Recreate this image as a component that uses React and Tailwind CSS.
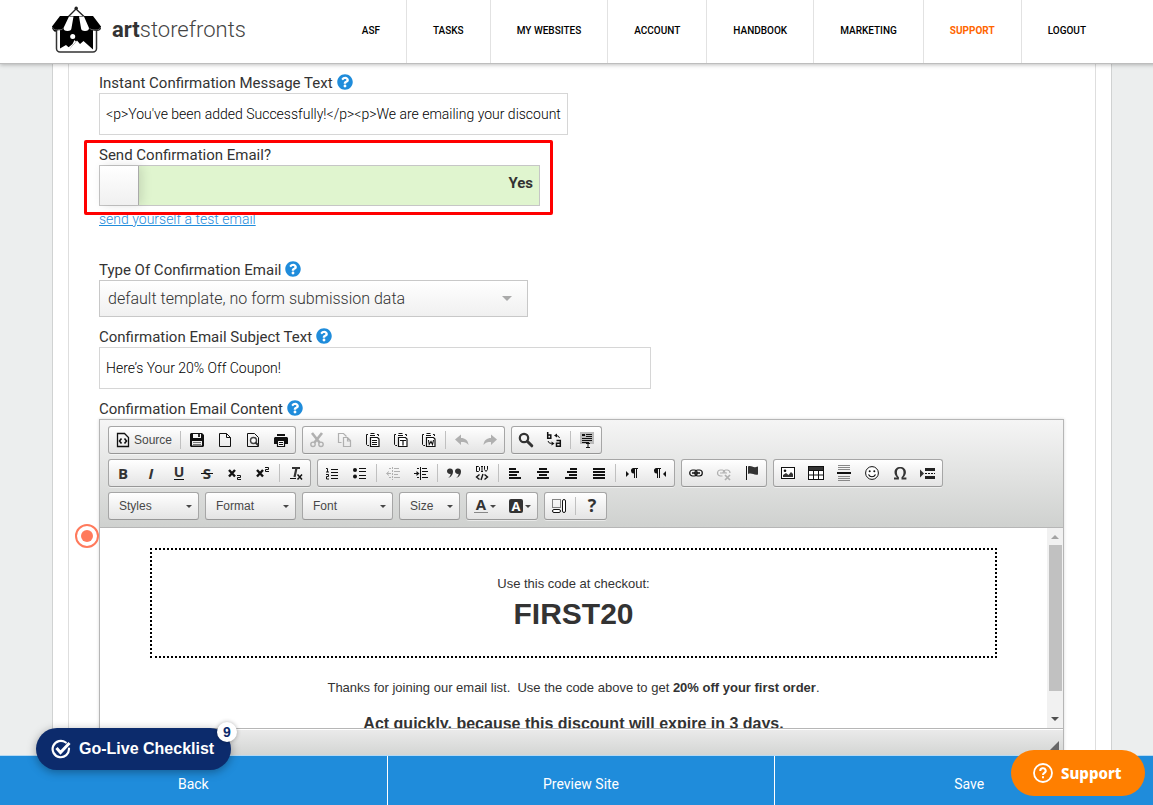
import React from "react";
import { FaQuestionCircle } from "react-icons/fa";

const NAV = ["ASF", "TASKS", "MY WEBSITES", "ACCOUNT", "HANDBOOK", "MARKETING", "SUPPORT", "LOGOUT"];

const DOC = "M2.5 1.5h7l4 4v9h-11z";

function Rows({ rows, h = 2, y0 = 3, step = 3 }) {
  return rows.map(([x, w], i) => <rect key={i} x={x} y={y0 + i * step} width={w} height={h} />);
}

function Clipboard({ children }) {
  return (
    <>
      <path d="M3 2.500H1.500V12.500L2.500 13.500H4" fill="none" stroke="currentColor" />
      <path d="M4 4V2.500h2v-1h3v1h2V4z" fill="#fff" />
      <path d="M5 3.500h5M5.500 1.500h4M12 2.500h1.500V4" fill="none" stroke="currentColor" />
      <path d="M5.500 5.500h7l1.500 1.500v7.500h-8.500z" fill="#fff" stroke="currentColor" strokeWidth="1.200" />
      {children}
    </>
  );
}

const Letter = ({ x = 8, y = 14, size = 15, children, ...rest }) => (
  <text x={x} y={y} fontSize={size} fontWeight="700" textAnchor="middle" fontFamily="Open Sans, sans-serif" {...rest}>
    {children}
  </text>
);

const ICONS = {
  source: (
    <>
      <path d={DOC} fill="none" stroke="currentColor" strokeWidth="1.3" />
      <path d="M6.500 6.500 4.500 9l2 2.500M9.500 6.500l2 2.500-2 2.500" fill="none" stroke="currentColor" strokeWidth="1.6" />
    </>
  ),
  save: (
    <>
      <path fillRule="evenodd" d="M2 1h11l2 2v11l-1 1H2l-1-1V2zM4 2v4h8V2zM3 9v4.500h10V9z" />
      <path d="M4 10h8v1H4zM4 12h8v1H4z" fill="#777" />
      <rect x="9" y="2" width="2" height="3" fill="#333" />
    </>
  ),
  newPage: <path d={DOC + "M9.500 1.500v4h4"} fill="none" stroke="currentColor" />,
  preview: (
    <>
      <path d={DOC} fill="none" stroke="currentColor" />
      <circle cx="8.500" cy="8.500" r="3" fill="#fff" stroke="#444" strokeWidth="1.4" />
      <path d="m10.500 10.500 3 3" stroke="#333" strokeWidth="2" />
    </>
  ),
  print: (
    <>
      <path d="M4 2h8v2H4zM2 5h12l1 1v6h-3V8H4v4H1V6z" />
      <path d="M4.500 8.500h7v6h-7z" fill="#fff" stroke="currentColor" strokeWidth="1.200" />
      <path d="M6 10.500h4M6 12.500h4" stroke="currentColor" />
    </>
  ),
  cut: (
    <>
      <path d="m3 1 7.500 9.500M13 1 5.500 10.500" fill="none" stroke="currentColor" strokeWidth="2.600" />
      <circle cx="4" cy="12.300" r="2.200" fill="none" stroke="currentColor" strokeWidth="1.400" />
      <circle cx="12" cy="12.300" r="2.200" fill="none" stroke="currentColor" strokeWidth="1.400" />
    </>
  ),
  copy: (
    <>
      <path d="M4.500 10.500h-3v-9h5l3 3" fill="none" stroke="currentColor" strokeWidth="1.200" />
      <path d="M6.500 5.500h4l3 3v6h-7zM10.500 6v3h3" fill="none" stroke="currentColor" strokeWidth="1.200" />
    </>
  ),
  paste: (
    <Clipboard>
      <path d="M7 8.500h5M7 10.500h5M7 12.500h5" stroke="currentColor" />
    </Clipboard>
  ),
  pasteText: (
    <Clipboard>
      <path d="M7 8.500h6M10 8.500v5" stroke="currentColor" strokeWidth="1.200" />
    </Clipboard>
  ),
  pasteWord: (
    <Clipboard>
      <path d="m7.500 8 .7 4.500L10 9.500l1.500 3L12.500 8" fill="none" stroke="currentColor" strokeWidth="1.100" />
    </Clipboard>
  ),
  undo: <path d="M7 2.500v3.500c4 0 7 2 7.500 7-2-2.500-4-3-7.500-3V13L1 7.500z" />,
  redo: <path d="M9 2.500v3.500C5 6 2 8 1.500 13c2-2.500 4-3 7.500-3V13l6-5.500z" />,
  find: (
    <>
      <circle cx="6" cy="6" r="4.200" fill="none" stroke="#333" strokeWidth="2.200" />
      <path d="m9.500 9.500 4.300 4.300" stroke="#333" strokeWidth="3" strokeLinecap="round" />
    </>
  ),
  replace: (
    <>
      <path d="M1.700 0v6.300H4.800V3H1.700M10.500 8.500h3.800V14.300H10.500v-3.100h3.800" fill="none" stroke="currentColor" strokeWidth="1.500" />
      <path d="M10 3.500q3 0 3.500 2.500M2 9q.500 2.500 3.500 2.500" fill="none" stroke="currentColor" />
      <path d="M11 1.500 8 3.500l3 2zM5.500 9.500l3 2-3 2z" />
    </>
  ),
  selectAll: (
    <>
      <rect x="1" y="0" width="14" height="12" fill="#bbb" />
      <path d="M3 2h3v2H3zM7 2h6v1H7zM7 4h6v1H7zM3 6h10v1H3zM3 8h10v1H3zM3 10h7v1H3zM7 11h4v1H9.500v3H11v1H7v-1h1.500v-3H7z" />
    </>
  ),
  bold: <Letter fill="#333">B</Letter>,
  italic: <Letter fontStyle="italic" fill="#333">I</Letter>,
  underline: (
    <>
      <Letter y={12} size={14} fill="#333">U</Letter>
      <path d="M3 14.500h10" stroke="currentColor" />
    </>
  ),
  strike: (
    <>
      <Letter fill="#333">S</Letter>
      <path d="M2 8.500h12" stroke="currentColor" />
    </>
  ),
  sub: (
    <>
      <path d="m2 5 6 6.500M8 5l-6 6.500" stroke="currentColor" strokeWidth="2.400" />
      <path d="M10 10.500h3.500v2H10.500v2h3.500" fill="none" stroke="currentColor" />
    </>
  ),
  sup: (
    <>
      <path d="m2 5 6 6.500M8 5l-6 6.500" stroke="currentColor" strokeWidth="2.400" />
      <path d="M10 2.500h3.500v2H10.500v2h3.500" fill="none" stroke="currentColor" />
    </>
  ),
  removeFormat: (
    <>
      <path d="M4 3h8M8.500 3 6.500 12" stroke="#333" strokeWidth="2.200" />
      <path d="M2 13.500h6" stroke="currentColor" />
      <path d="m9.500 9.500 4.500 5M14 9.500l-4.500 5" stroke="currentColor" strokeWidth="1.500" />
    </>
  ),
  numbered: (
    <>
      <path d="M2 3.500h1.500V7M2 7h3M2 9.500h2.500v2H2.500v2.500H5" fill="none" stroke="currentColor" />
      <path d="M7 4h7v1H7zM7 7h7v1H7zM7 10h7v1H7zM7 13h7v1H7z" />
    </>
  ),
  bulleted: (
    <>
      <circle cx="3" cy="5" r="2" />
      <circle cx="3" cy="11.500" r="2" />
      <path d="M7 3h7v1H7zM7 6h7v1H7zM7 10h7v1H7zM7 13h7v1H7z" />
    </>
  ),
  outdent: (
    <>
      <path d="M7.500 2v13" stroke="currentColor" strokeDasharray="2 1" />
      <path d="M9 3h5v1H9zM9 6h6v1H9zM9 9h4v1H9zM9 12h6v1H9zM4 3h2v1H4zM4 12h2v1H4z" />
      <path d="M2 8.500h4M4 6.500l-2.500 2L4 10.500" fill="none" stroke="currentColor" />
    </>
  ),
  indent: (
    <>
      <path d="M7.500 2v13" stroke="currentColor" />
      <path d="M9 3h5v1H9zM9 6h6v1H9zM9 9h4v1H9zM9 12h6v1H9zM4 3h2v1H4zM4 12h2v1H4z" />
      <path d="M1 8.500h3" stroke="currentColor" />
      <path d="m3.500 6 3 2.500-3 2.500z" />
    </>
  ),
  quote: (
    <path
      fill="#333"
      d="M4 3.500a2.700 2.700 0 1 0 .7 5.200C4.500 10.500 3.500 12 2 13c3.500-1 5-4 5-6.500A3 3 0 0 0 4 3.500zM12 3.500a2.700 2.700 0 1 0 .7 5.200c-.2 1.800-1.200 3.300-2.700 4.300 3.500-1 5-4 5-6.500a3 3 0 0 0-3-3z"
    />
  ),
  div: (
    <>
      <path d="M2.500 1v5.500h2l1-1v-3l-1-1h-2M7 1.500h2M8 1.500v5M7 6.500h2M10.500 1v3.500l1.500 2 1.500-2V1" fill="none" stroke="currentColor" />
      <path d="M5.500 9.500 2.500 12l3 2.500M10.500 9.500l3 2.500-3 2.500M9 9l-2 6" fill="none" stroke="currentColor" strokeWidth="1.400" />
    </>
  ),
  alignLeft: <Rows rows={[[2, 7], [2, 10], [2, 8], [2, 12]]} />,
  alignCenter: <Rows rows={[[4, 8], [2, 12], [4, 8], [2, 12]]} />,
  alignRight: <Rows rows={[[7, 7], [4, 10], [6, 8], [2, 12]]} />,
  justify: <Rows rows={[[2, 12], [2, 12], [2, 12], [2, 12]]} />,
  ltr: (
    <>
      <path d="m2 6 3 3-3 3z" />
      <path d="M9.500 3H14v1h-1v9h-1V4h-1v9h-1V8.500a2.700 2.700 0 0 1-.5-5.500z" />
    </>
  ),
  rtl: (
    <>
      <path d="m14 6-3 3 3 3z" />
      <path d="M4.500 3H9v1H8v9H7V4H6v9H5V8.500A2.700 2.700 0 0 1 4.500 3z" />
    </>
  ),
  link: (
    <>
      <rect x="1.700" y="5" width="7.500" height="6" rx="3" fill="none" stroke="currentColor" strokeWidth="1.200" />
      <rect x="6.800" y="5" width="7.500" height="6" rx="3" fill="none" stroke="currentColor" strokeWidth="1.200" />
      <path d="M4 8h8" stroke="currentColor" strokeWidth="1.500" />
    </>
  ),
  unlink: (
    <>
      <path d="M6.500 11H4.500a3 3 0 0 1 0-6H6.500a3 3 0 0 1 2.500 2.500M7 7.500A3 3 0 0 1 9.500 5h2a3 3 0 0 1 2.500 3M4 8h7" fill="none" stroke="currentColor" strokeWidth="1.200" />
      <path d="m9 10 5 5M14 10l-5 5" stroke="currentColor" strokeWidth="1.700" />
    </>
  ),
  flag: (
    <>
      <path d="M2.500 1v14" stroke="currentColor" />
      <path d="M4 1.500c3-1.500 5 1.500 8 .5l2-.5v8c-4 1-6-2-10-.500z" fill="#333" />
    </>
  ),
  image: (
    <>
      <rect x="1.500" y="2.500" width="13" height="11" fill="#fff" stroke="currentColor" />
      <circle cx="5" cy="5.800" r="1.300" />
      <path d="m3 12 0-2 3-2 2.500 2L11 7l2 2v3z" fill="#333" />
    </>
  ),
  table: (
    <>
      <rect x="0.500" y="1.500" width="15" height="13" fill="#fff" stroke="currentColor" />
      <rect x="1" y="2" width="14" height="3" fill="#333" />
      <path d="M1 5.500h14M1 10h14M5.500 5v9M10.500 5v9" stroke="currentColor" />
    </>
  ),
  rule: (
    <>
      <path d="M2 .500h12M2 2.500h12M2 4.500h12M2 11.500h12M2 13.500h12M2 15.500h12" stroke="#888" />
      <path d="M1 8h14" stroke="currentColor" strokeWidth="2" />
    </>
  ),
  smiley: (
    <>
      <circle cx="8" cy="8" r="6.400" fill="#fff" stroke="currentColor" />
      <circle cx="5.700" cy="6.200" r="1" />
      <circle cx="10.300" cy="6.200" r="1" />
      <path d="M4.500 9.500c1.500 3 5.500 3 7 0" fill="none" stroke="currentColor" strokeWidth="1.200" />
    </>
  ),
  omega: (
    <path
      fill="#333"
      d="M2 14.500v-2h3.300C3.500 11 2.500 9.300 2.500 7.200 2.500 4 4.800 2 8.200 2s5.700 2 5.700 5.200c0 2.100-1 3.800-2.800 5.300h3.300v2H9.500v-2.200c1.400-1.100 2-2.800 2-5 0-2.300-1.200-3.800-3.300-3.800S4.900 5 4.900 7.300c0 2.200.6 3.900 2 5v2.200z"
    />
  ),
  pageBreak: (
    <>
      <path d="m0 4.500 4 4-4 4z" fill="#333" />
      <path d="M5 3h10v3H5zM5 11h10v3H5z" fill="#222" />
      <path d="M5 8.500h10" stroke="currentColor" strokeDasharray="2 1" />
    </>
  ),
  textColor: (
    <>
      <Letter y={12} size={15} fill="#333">A</Letter>
      <path d="M1 14.500h14" stroke="#888" />
    </>
  ),
  bgColor: (
    <>
      <rect x="1" y="1" width="14" height="14" rx="2" fill="#333" />
      <Letter y={13} size={13} fill="#fff">A</Letter>
    </>
  ),
  blocks: (
    <>
      <rect x="1.500" y="1.500" width="8" height="8" fill="none" stroke="currentColor" strokeDasharray="1 1" />
      <rect x="11.500" y="1.500" width="3" height="13" rx="1.500" fill="#fff" stroke="currentColor" />
      <rect x="1.500" y="11.500" width="8" height="3" rx="1.500" fill="#fff" stroke="currentColor" />
    </>
  ),
  help: <Letter size={18} fill="#333">?</Letter>,
};

function Icon({ name }) {
  return (
    <svg viewBox="0 0 16 16" className="h-4 w-4 shrink-0 overflow-visible" fill="currentColor" aria-hidden="true">
      {ICONS[name]}
    </svg>
  );
}

function Caret() {
  return <span className="border-x-[3px] border-t-[3px] border-x-transparent border-t-[#474747]" />;
}

const DISABLED = ["cut", "copy", "undo", "redo", "outdent", "unlink"];

function Group({ items }) {
  return (
    <div className="flex h-7 items-center rounded-[3px] border border-[#a6a6a6] border-b-[#979797] bg-linear-to-b from-white to-[#e4e4e4] shadow-[0_1px_0_rgba(255,255,255,.5)]">
      {items.map((name, i) => {
        if (name === "|") return <span key={i} className="mx-[2px] h-[18px] w-px bg-[#c0c0c0]" />;
        if (name === "source")
          return (
            <button key={i} className="flex h-full items-center gap-[3px] px-[6px] text-[12px] text-[#484848]">
              <span className="text-[#111]">
                <Icon name="source" />
              </span>
              Source
            </button>
          );
        const color = name === "textColor" || name === "bgColor";
        return (
          <button
            key={i}
            aria-label={name}
            disabled={DISABLED.includes(name)}
            className="flex h-full items-center gap-px px-[6px] text-[#111] disabled:text-[#b0b0b0]"
          >
            <Icon name={name} />
            {color && <Caret />}
          </button>
        );
      })}
    </div>
  );
}

function Combo({ label, small }) {
  return (
    <button
      className={
        "flex h-7 items-center justify-between rounded-[3px] border border-[#a6a6a6] border-b-[#979797] bg-linear-to-b from-white to-[#e4e4e4] pr-[6px] pl-[10px] text-[12px] text-[#484848] " +
        (small ? "w-[61px]" : "w-[91px]")
      }
    >
      {label}
      <Caret />
    </button>
  );
}

function FieldLabel({ htmlFor, help, children }) {
  return (
    <div className="flex h-5 items-center gap-1 text-[15px] text-[#333]">
      <label htmlFor={htmlFor}>{children}</label>
      {help && (
        <a href="#help" aria-label="Help" className="pb-[2px]">
          <FaQuestionCircle className="h-4 w-4 text-[#1f8cdb]" />
        </a>
      )}
    </div>
  );
}

function Logo() {
  return (
    <a href="#home" className="flex items-center gap-[10px] pb-1">
      <svg viewBox="0 0 50 48" className="h-12 w-[50px]" aria-hidden="true">
        <path d="M16 11 24 3 32.500 11" fill="none" stroke="#222" strokeWidth="1.300" />
        <circle cx="24.200" cy="2.300" r="1.700" fill="#222" />
        <path d="M4.500 22v20.500a3.500 3.500 0 0 0 3.500 3.500h33a3.500 3.500 0 0 0 3.500-3.500V22" fill="#fff" stroke="#333" strokeWidth="1.500" />
        <path d="M8 22h33v21.500l-9.500-8.500-3.500 3-3-3.500-7 8-4-3.500-6 3.500z" fill="#000" />
        <circle cx="20.700" cy="30.500" r="2.500" fill="#fff" />
        <path d="M22.500 34 24 35.500 18.500 42l-1.500 1.500h-3.500l4-3 3-2.500z" fill="#fff" />
        <path d="M8 10h33l8 10.500v1.500c0 2-2 3-4.500 3s-4-1-4-1q-2 1.500-5 1.500t-4-1.500q-2 1.500-7 1.500t-7-1.500q-1 1.500-4 1.500t-5-1.500-4 1-4.500-3v-1.500z" fill="#000" />
        <path d="M17 10.500h4.500L19.500 22q0 3-4 3t-4-3zM27 10.500h5L37 22q0 3-4 3t-4-3z" fill="#fff" />
        <path d="M.500 21q0 3 5.500 3t5.500-2M48.500 21q0 3-5.500 3t-5.500-2" fill="none" stroke="#666" />
      </svg>
      <span className="text-[22px] leading-6 text-[#444]">
        <b className="font-bold text-[#333]">art</b>
        <span className="font-light">storefronts</span>
      </span>
    </a>
  );
}

function Editor() {
  return (
    <div className="mr-[31px] border border-[#b6b6b6] font-['Liberation_Sans',Arial,sans-serif] shadow-[0_0_3px_rgba(0,0,0,.15)]">
      <div className="flex flex-col gap-[5px] border-b border-[#b6b6b6] bg-linear-to-b from-[#f5f5f5] to-[#cfd1cf] px-2 pt-[6px] pb-[7px]">
        <div className="flex gap-[6px]">
          <Group items={["source", "|", "save", "newPage", "preview", "print"]} />
          <Group items={["cut", "copy", "paste", "pasteText", "pasteWord", "|", "undo", "redo"]} />
          <Group items={["find", "replace", "|", "selectAll"]} />
        </div>
        <div className="flex gap-[6px]">
          <Group items={["bold", "italic", "underline", "strike", "sub", "sup", "|", "removeFormat"]} />
          <Group
            items={["numbered", "bulleted", "|", "outdent", "indent", "|", "quote", "div", "|", "alignLeft", "alignCenter", "alignRight", "justify", "|", "ltr", "rtl"]}
          />
          <Group items={["link", "unlink", "flag"]} />
          <Group items={["image", "table", "rule", "smiley", "omega", "pageBreak"]} />
        </div>
        <div className="flex gap-[6px]">
          <Combo label="Styles" />
          <Combo label="Format" />
          <Combo label="Font" />
          <Combo label="Size" small />
          <Group items={["textColor", "bgColor"]} />
          <Group items={["blocks", "|", "help"]} />
        </div>
      </div>

      <div className="flex h-[200px] overflow-hidden bg-white">
        <div className="min-w-0 flex-1 px-[50px] pt-5 text-center text-[13px] leading-5 text-[#333]">
          <div className="flex h-[110px] flex-col border-2 border-dotted border-black pt-6">
            <p>Use this code at checkout:</p>
            <p className="text-[30px] leading-10 font-bold">FIRST20</p>
          </div>
          <p className="mt-5">
            Thanks for joining our email list.&nbsp; Use the code above to get <b>20% off your first order</b>.
          </p>
          <p className="mt-4 text-[16px] font-bold">Act quickly, because this discount will expire in 3 days.</p>
        </div>
        <div className="flex w-4 flex-col items-center bg-[#f1f1f1] py-[7px]">
          <span className="border-x-4 border-b-4 border-x-transparent border-b-[#a3a3a3]" />
          <span className="mt-[6px] h-[146px] w-[13px] bg-[#c1c1c1]" />
          <span className="mt-auto border-x-4 border-t-4 border-x-transparent border-t-[#505050]" />
        </div>
      </div>

      <div className="flex h-8 justify-end border-t border-[#b6b6b6] bg-linear-to-b from-[#ebebeb] to-[#cfd1cf] pt-3 pr-1 shadow-[inset_0_1px_0_#fff]">
        <span className="h-0 border-b-[9px] border-l-[9px] border-b-[#666] border-l-transparent" />
      </div>
    </div>
  );
}

export default function App() {
  return (
    <div className="relative flex h-screen flex-col overflow-hidden bg-[#eceeee] font-[Roboto,sans-serif]">
      <header className="relative z-10 -mr-[11px] border-b border-[#bdbdbd] bg-white shadow-[0_1px_4px_rgba(0,0,0,.25)]">
        <div className="mx-auto flex h-[63px] w-full max-w-[1060px] items-stretch justify-between">
          <Logo />
          <nav className="flex text-[10px] font-medium text-black">
            {NAV.map((n) => (
              <a
                key={n}
                href={"#" + n.toLowerCase().replace(" ", "-")}
                className={"flex items-center border-r border-[#e2e2e2] px-[26px] pb-[2px] last:border-r-0 " + (n === "SUPPORT" ? "font-bold text-[#ff6600]" : "")}
              >
                {n}
              </a>
            ))}
          </nav>
        </div>
      </header>

      <main className="-mr-[11px] min-h-0 flex-1 overflow-hidden">
        <div className="mx-auto min-h-full max-w-[1060px] border-x border-[#d0d2d2] bg-white px-[15px]">
          <form className="border-x border-[#dedede] pt-[9px] pl-[30px]" onSubmit={(e) => e.preventDefault()}>
            <FieldLabel htmlFor="msg" help>
              Instant Confirmation Message Text
            </FieldLabel>
            <input
              id="msg"
              defaultValue="<p>You've been added Successfully!</p><p>We are emailing your discount"
              className="block h-[42px] w-[469px] border border-[#d6d6d6] bg-white px-[6px] text-[14px] font-light text-black"
            />

            <div className="relative mt-[10px]">
              <FieldLabel htmlFor="send">Send Confirmation Email?</FieldLabel>
              <label className="flex h-[41px] w-[441px] cursor-pointer border border-[#c6c6c6] bg-[#e0f5cf]">
                <input id="send" type="checkbox" defaultChecked className="sr-only" />
                <span className="w-[39px] border-r border-[#aaa] bg-linear-to-b from-white to-[#f0f0f0] shadow-[3px_0_10px_rgba(0,0,0,.12)]" />
                <span className="flex-1 pt-[7px] pr-[6px] text-right text-[15px] leading-5 font-bold text-[#333]">Yes</span>
              </label>
              <div className="pointer-events-none absolute -top-[5px] -left-[15px] h-[75px] w-[469px] rounded-xs border-[3px] border-[#ff0000]" />
            </div>
            <a href="#test" className="mt-[3px] block h-5 w-fit text-[14px] leading-5 font-light text-[#1f8cdb] underline">
              send yourself a test email
            </a>

            <div className="mt-[31px]">
              <FieldLabel htmlFor="type" help>
                Type Of Confirmation Email
              </FieldLabel>
              <div className="relative w-[429px]">
                <select
                  id="type"
                  className="block h-[37px] w-full appearance-none border border-[#c8c8c8] bg-linear-to-b from-white to-[#f0f0f0] pl-2 text-[16px] font-light text-[#333]"
                >
                  <option>default template, no form submission data</option>
                </select>
                <span className="pointer-events-none absolute top-4 right-4 border-x-[5px] border-t-[5px] border-x-transparent border-t-[#aaa]" />
              </div>
            </div>

            <div className="mt-[10px]">
              <FieldLabel htmlFor="subject" help>
                Confirmation Email Subject Text
              </FieldLabel>
              <input
                id="subject"
                defaultValue="Here’s Your 20% Off Coupon!"
                className="block h-[42px] w-[552px] border border-[#d6d6d6] bg-white px-[6px] text-[14px] font-light text-black"
              />
            </div>

            <div className="mt-[10px]">
              <FieldLabel help>Confirmation Email Content</FieldLabel>
              <div className="relative">
                <Editor />
                <span className="absolute top-[105px] -left-6 flex h-6 w-6 items-center justify-center rounded-full border-2 border-[#ff7a5c] bg-white">
                  <span className="h-3 w-3 rounded-full bg-[#ff7a5c]" />
                </span>
              </div>
            </div>
          </form>
        </div>
      </main>

      <footer className="relative -mr-[10px] grid h-[50px] grid-cols-3 divide-x divide-white border-t border-[#b5d9f3] bg-[#1f8cdb] text-[14px] text-white">
        <button className="pt-[8px]">Back</button>
        <button className="pt-[8px]">Preview Site</button>
        <button className="pt-[8px]">Save</button>
      </footer>

      <button className="absolute bottom-[35px] left-9 z-20 flex h-[42px] w-[195px] items-center gap-2 rounded-full bg-[#0c2b6c] pl-[15px] font-['Liberation_Sans',Arial,sans-serif] text-[16px] font-bold text-white shadow-[0_2px_10px_rgba(0,0,0,.35)]">
        <svg viewBox="0 0 20 20" className="h-5 w-5" fill="none" stroke="#fff" aria-hidden="true">
          <path d="M14.800 3.500A8.200 8.200 0 1 0 18 9.500" strokeWidth="2.200" strokeLinecap="round" />
          <path d="m5.500 9 4 4.500 9-9.500" strokeWidth="3" />
        </svg>
        Go-Live Checklist
        <span className="absolute -top-[6px] -right-[6px] flex h-5 w-5 items-center justify-center rounded-full bg-white text-[14px] text-[#0c2b6c] shadow-[0_0_4px_rgba(0,0,0,.3)]">9</span>
      </button>

      <button className="absolute right-2 bottom-[9px] z-20 flex h-[46px] w-[134px] items-center gap-2 rounded-full bg-[#ff7f00] pl-[22px] font-['Noto_Sans',sans-serif] text-[15px] font-extrabold text-white">
        <svg viewBox="0 0 20 20" className="h-5 w-5" fill="none" stroke="#fff" strokeWidth="1.800" aria-hidden="true">
          <circle cx="10" cy="10" r="9" />
          <path d="M7.300 8A2.700 2.500 0 1 1 11.200 10Q10 10.600 10 12" strokeWidth="2" />
          <path d="M10 13.300v2" strokeWidth="2" />
        </svg>
        Support
      </button>
    </div>
  );
}
